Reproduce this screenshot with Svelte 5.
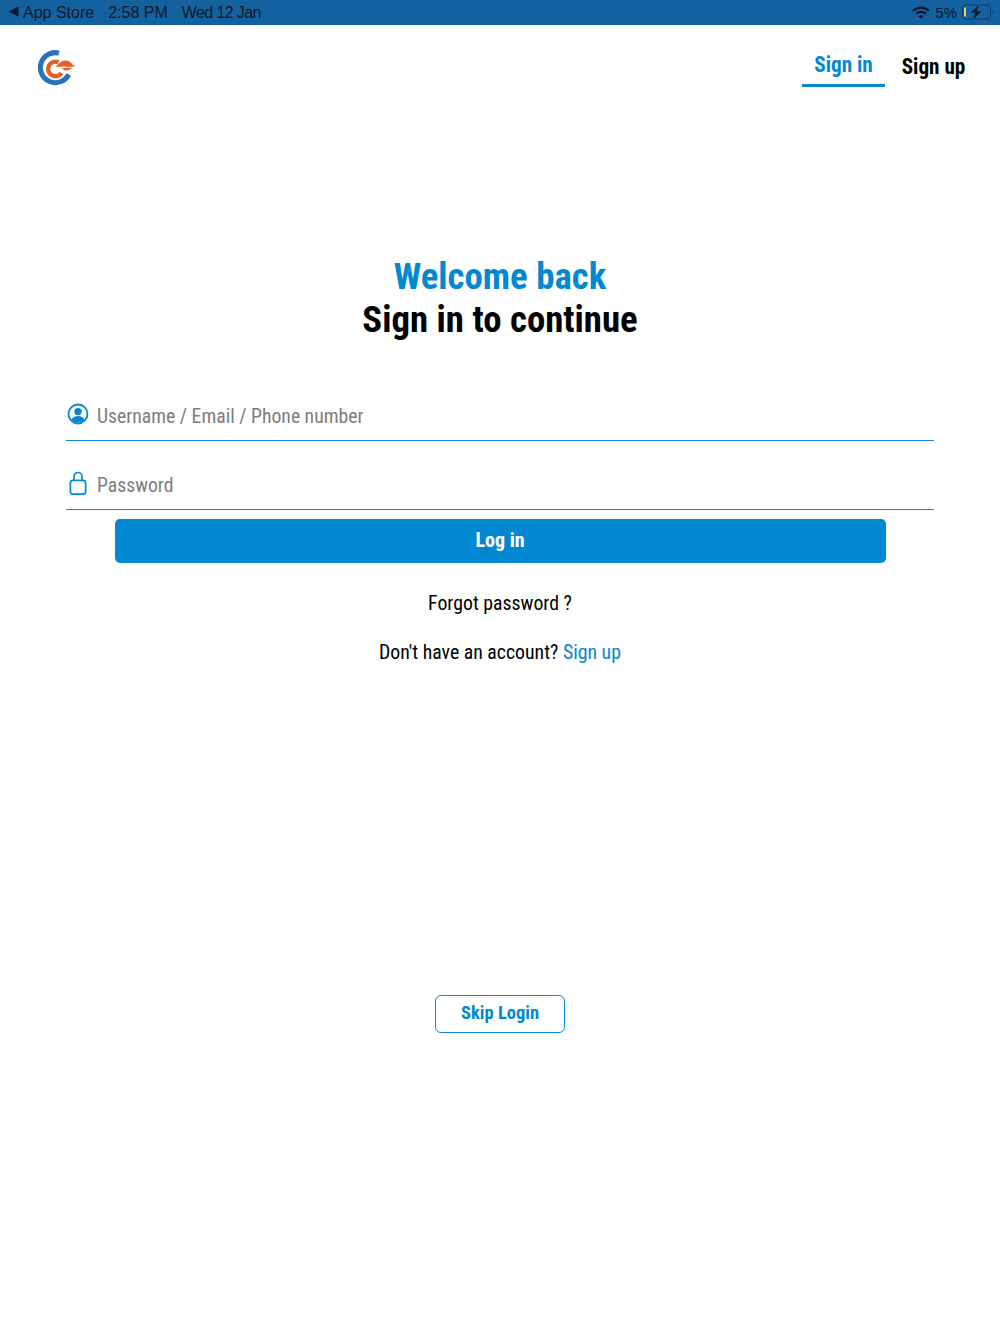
<script>
  let username = "";
  let password = "";
</script>

<div class="page">
  <div class="status">
    <div class="status-left">
      <span class="back">
        <svg width="11" height="11" viewBox="0 0 11 11"><path d="M10.500 0.500v10L0.500 5.500z" fill="#0b1a2b" /></svg>
        App Store
      </span>
      <span>2:58 PM</span>
      <span class="date">Wed 12 Jan</span>
    </div>
    <div class="status-right">
      <svg width="18" height="13" viewBox="0 0 18 13" fill="none" stroke="#0b1a2b" stroke-width="2.200">
        <path d="M1 4.800a11.500 11.500 0 0 1 16 0" />
        <path d="M4 7.800a7.200 7.200 0 0 1 10 0" />
        <path d="M9 12.800 6.600 10.400a3.400 3.400 0 0 1 4.800 0z" fill="#0b1a2b" stroke="none" />
      </svg>
      <span>5%</span>
      <svg width="32" height="16" viewBox="0 0 32 16" fill="none">
        <rect x="0.500" y="1" width="28" height="14" rx="3.500" stroke="#0b1a2b" stroke-opacity="0.500" />
        <rect x="2" y="3.500" width="2" height="9" fill="#e8cf5a" />
        <path d="M30.500 6c1 .4 1 3.600 0 4z" fill="#0b1a2b" fill-opacity="0.500" />
        <path d="M18 0 8 9h5l-2.500 7L20 7h-5z" fill="#0b1a2b" stroke="#14619f" stroke-width="0.600" />
      </svg>
    </div>
  </div>

  <header>
    <svg class="logo" width="40" height="36" viewBox="0 0 40 36" fill="none">
      <path d="M23 3.100A15 15 0 1 0 32.700 24.500" stroke="#2a72b5" stroke-width="5" />
      <path d="M22.500 12.300a7.300 7.300 0 1 0 3 10.700" stroke="#e2602b" stroke-width="4.300" />
      <path d="M20 17.500C22 13 26 10 30.500 10.500c3 .4 5 2.500 6.500 4.500l2.500 1.500-8 .5c-4-.8-8-.5-11.500.5z" fill="#e2602b" />
      <path d="M26 18.300c3.500-.6 7-.6 10.500-.6-2 1.600-4 2.800-6.500 2.800-1.600 0-3-.9-4-2.200z" fill="#e2602b" />
    </svg>
    <nav>
      <a class="tab active" href="#signin">Sign in</a>
      <a class="tab" href="#signup">Sign up</a>
    </nav>
  </header>

  <main>
    <h1><span class="blue">Welcome back</span><br />Sign in to continue</h1>

    <form on:submit|preventDefault>
      <label class="field">
        <svg width="22" height="22" viewBox="0 0 22 22">
          <circle cx="11" cy="11" r="9.500" fill="none" stroke="#0288d1" stroke-width="1.800" />
          <circle cx="11" cy="8.600" r="3.700" fill="#0288d1" />
          <path d="M4.500 17c1-2.800 3.500-3.900 6.500-3.900s5.500 1.100 6.500 3.900a9.500 9.500 0 0 1-13 0z" fill="#0288d1" />
        </svg>
        <input bind:value={username} placeholder="Username / Email / Phone number" />
      </label>
      <label class="field">
        <svg width="22" height="26" viewBox="0 0 22 26" fill="none" stroke="#0288d1" stroke-width="1.700">
          <rect x="3.400" y="10.400" width="15.200" height="13.800" rx="2.500" />
          <path d="M7 10.500V6.500a4 4 0 0 1 8 0v4" />
        </svg>
        <input type="text" bind:value={password} placeholder="Password" />
      </label>
      <button class="login" type="submit">Log in</button>
    </form>

    <a class="forgot" href="#forgot">Forgot password ?</a>
    <p class="account">Don't have an account? <a href="#signup">Sign up</a></p>

    <button class="skip" type="button">Skip Login</button>
  </main>
</div>

<style>
  :global(body) {
    background: #fff;
  }
  .page {
    width: 1000px;
    height: 1334px;
    overflow: hidden;
    font-family: Roboto, "Liberation Sans", sans-serif;
    font-stretch: 75%;
    color: #000;
  }
  a {
    text-decoration: none;
  }
  .status {
    height: 25px;
    box-sizing: border-box;
    padding: 0 6px 1px 8px;
    background: #14619f;
    display: flex;
    justify-content: space-between;
    align-items: center;
    font-family: "Liberation Sans", sans-serif;
    font-stretch: normal;
    font-size: 15px;
    color: #0b1a2b;
  }
  .status-left {
    display: flex;
    gap: 14px;
    padding-top: 2px;
    font-size: 16px;
  }
  .date {
    letter-spacing: -0.600px;
  }
  .back {
    display: flex;
    align-items: center;
    gap: 4px;
  }
  .back svg {
    margin-bottom: 3px;
  }
  .status-right {
    display: flex;
    align-items: center;
    gap: 5px;
  }
  header {
    height: 62px;
    display: flex;
    justify-content: space-between;
    padding: 0 25px 0 36px;
  }
  .logo {
    margin-top: 25px;
  }
  nav {
    display: flex;
    gap: 7px;
  }
  .tab {
    width: 83px;
    height: 62px;
    box-sizing: border-box;
    padding-top: 27px;
    text-align: center;
    font-size: 21.200px;
    line-height: 30px;
    font-weight: 700;
    color: #000;
  }
  .tab.active {
    color: #0288d1;
    padding-top: 25px;
    border-bottom: 3px solid #0288d1;
  }
  main {
    display: flex;
    flex-direction: column;
    align-items: center;
  }
  h1 {
    margin: 168px 0 0;
    text-align: center;
    font-size: 36.800px;
    line-height: 43px;
    font-weight: 700;
  }
  .blue {
    color: #0288d1;
  }
  form {
    width: 868px;
    margin-top: 42px;
    display: flex;
    flex-direction: column;
    align-items: center;
  }
  .field {
    width: 100%;
    height: 69px;
    box-sizing: border-box;
    padding: 20px 0 0 1px;
    display: flex;
    align-items: center;
    gap: 8px;
    border-bottom: 1px solid #1a84d4;
  }
  .field:first-child {
    height: 58px;
    padding-top: 10px;
  }
  .field svg {
    margin-bottom: 4px;
  }
  .field:first-child svg {
    margin-bottom: 6px;
  }
  input {
    flex: 1;
    border: 0;
    outline: 0;
    padding: 0;
    font: inherit;
    font-size: 19.700px;
    background: transparent;
  }
  input::placeholder {
    color: #7d7d7d;
    opacity: 1;
  }
  .login {
    width: 771px;
    height: 44px;
    margin-top: 9px;
    padding: 0 0 2px;
    border: 0;
    border-radius: 5px;
    background: #0288d1;
    color: #fff;
    font: inherit;
    font-size: 20px;
    font-weight: 700;
  }
  .forgot {
    margin-top: 28px;
    font-size: 19.800px;
    line-height: 26px;
    color: #000;
  }
  .account {
    margin: 23px 0 0;
    font-size: 19.800px;
    line-height: 26px;
  }
  .account a {
    color: #0288d1;
  }
  .skip {
    width: 130px;
    height: 38px;
    margin-top: 329px;
    padding: 0 0 2px;
    border: 1.500px solid #0288d1;
    border-radius: 6px;
    background: #fff;
    color: #0288d1;
    font: inherit;
    font-size: 18.500px;
    font-weight: 700;
  }
</style>
